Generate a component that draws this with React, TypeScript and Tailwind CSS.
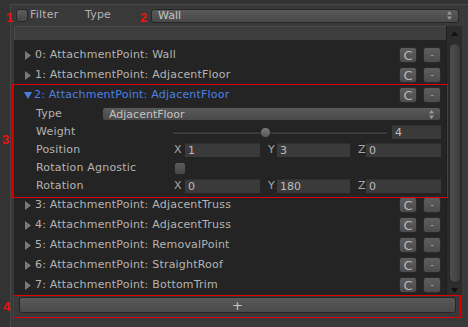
import React from "react";

const items = [
  "Wall",
  "AdjacentFloor",
  "AdjacentFloor",
  "AdjacentTruss",
  "AdjacentTruss",
  "RemovalPoint",
  "StraightRoof",
  "BottomTrim",
];

function UpDown() {
  return (
    <svg width="5" height="9" viewBox="0 0 5 9" className="shrink-0">
      <path d="M2.5 0 L5 3.5 L0 3.5 Z" fill="#9a9a9a" />
      <path d="M0 5.5 L5 5.5 L2.5 9 Z" fill="#9a9a9a" />
    </svg>
  );
}

function Dropdown({ value, width }: { value: string; width: number }) {
  return (
    <div
      className="h-[14px] flex items-center justify-between pl-[6px] pr-[6px] rounded-[3px] border border-[#262626] bg-gradient-to-b from-[#5a5a5a] to-[#494949] text-[#c4c4c4]"
      style={{ width }}
    >
      <span className="leading-none">{value}</span>
      <UpDown />
    </div>
  );
}

function Check() {
  return (
    <div className="w-[12px] h-[13px] rounded-[3px] border border-[#262626] bg-gradient-to-b from-[#5c5c5c] to-[#474747]" />
  );
}

function Field({ value, width }: { value: string; width: number }) {
  return (
    <div
      className="h-[14px] flex items-center pl-[3px] bg-[#3a3a3a] border-t border-[#2e2e2e] text-[#bdbdbd] leading-none"
      style={{ width }}
    >
      {value}
    </div>
  );
}

function Vec3({ x, y, z }: { x: string; y: string; z: string }) {
  return (
    <div className="flex items-center">
      <span className="w-[11px] text-[#a8a8a8]">X</span>
      <Field value={x} width={75} />
      <span className="w-[8px]" />
      <span className="w-[9px] text-[#a8a8a8]">Y</span>
      <Field value={y} width={73} />
      <span className="w-[8px]" />
      <span className="w-[8px] text-[#a8a8a8]">Z</span>
      <Field value={z} width={75} />
    </div>
  );
}

function SmallButton({ label }: { label: string }) {
  return (
    <div className="w-[18px] h-[16px] flex items-center justify-center rounded-[3px] border border-[#2a2a2a] bg-gradient-to-b from-[#5e5e5e] to-[#4c4c4c] text-[#b8b8b8] leading-none">
      {label === "C" ? <span className="text-[13px]">C</span> : <span className="text-[9px]">-</span>}
    </div>
  );
}

function ItemRow({ index, name, open }: { index: number; name: string; open?: boolean }) {
  return (
    <div className="h-[20px] flex items-center pl-[11px] pr-[5px]">
      {open ? (
        <svg width="8" height="7" viewBox="0 0 8 7" className="shrink-0 mr-[2px] -ml-[1px]">
          <path d="M0 0 L8 0 L4 7 Z" fill="#4c7fe0" />
        </svg>
      ) : (
        <svg width="6" height="9" viewBox="0 0 6 9" className="shrink-0 mr-[4px]">
          <path d="M0 0 L6 4.5 L0 9 Z" fill="#7a7a7a" />
        </svg>
      )}
      <span className={`flex-1 tracking-[0.2px] ${open ? "text-[#4c80e4]" : "text-[#b4b4b4]"}`}>
        {index}: AttachmentPoint: {name}
      </span>
      <SmallButton label="C" />
      <span className="w-[6px]" />
      <SmallButton label="-" />
    </div>
  );
}

function SubRow({ label, labelWidth, children }: { label: string; labelWidth: number; children?: React.ReactNode }) {
  return (
    <div className="h-[18px] flex items-center pl-[22px]">
      <span className="shrink-0 tracking-[0.2px] text-[#b4b4b4]" style={{ width: labelWidth }}>
        {label}
      </span>
      {children}
    </div>
  );
}

export default function App() {
  return (
    <div className="relative w-[468px] h-[327px] overflow-hidden bg-[#333333] font-['DejaVu_Sans',sans-serif] text-[11px]">
      <div className="ml-[10px] mt-[4px] h-[330px] border-l border-t border-[#474747] bg-[#393939]">
        {/* top bar */}
        <div className="h-[21px] flex items-center">
          <div className="w-[74px] flex items-center pl-[5px]">
            <Check />
            <span className="ml-[2px] tracking-[0.2px] text-[#b4b4b4]">Filter</span>
          </div>
          <span className="w-[66px] tracking-[0.2px] text-[#b4b4b4]">Type</span>
          <Dropdown value="Wall" width={308} />
        </div>

        {/* list */}
        <div className="ml-[3px] flex">
          <div className="w-[432px]">
            <div className="h-[14px] bg-[#3e3e3e] border-t border-l border-[#4a4a4a] rounded-tl-[3px]" />
            <div className="h-[256px] bg-[#242424] pt-[5px]">
              <ItemRow index={0} name={items[0]} />
              <ItemRow index={1} name={items[1]} />
              <ItemRow index={2} name={items[2]} open />
              <SubRow label="Type" labelWidth={66}>
                <Dropdown value="AdjacentFloor" width={339} />
              </SubRow>
              <SubRow label="Weight" labelWidth={137}>
                <div className="w-[214px] h-[11px] flex items-center relative">
                  <div className="w-full h-[3px] rounded-full bg-[#3c3c3c] border-t border-[#1c1c1c]" />
                  <div className="absolute left-[87px] top-0 w-[11px] h-[11px] rounded-full bg-gradient-to-b from-[#7a7a7a] to-[#5a5a5a] border border-[#2a2a2a]" />
                </div>
                <span className="w-[5px]" />
                <Field value="4" width={49} />
              </SubRow>
              <SubRow label="Position" labelWidth={138}>
                <Vec3 x="1" y="3" z="0" />
              </SubRow>
              <SubRow label="Rotation Agnostic" labelWidth={138}>
                <Check />
              </SubRow>
              <SubRow label="Rotation" labelWidth={138}>
                <Vec3 x="0" y="180" z="0" />
              </SubRow>
              {items.slice(3).map((n, i) => (
                <ItemRow key={i} index={i + 3} name={n} />
              ))}
            </div>
          </div>

          {/* scrollbar */}
          <div className="w-[16px] h-[270px] bg-[#2c2c2c] border-l border-[#1e1e1e] flex flex-col items-center">
            <svg width="7" height="5" viewBox="0 0 7 5" className="mt-[5px]">
              <path d="M3.5 0 L7 5 L0 5 Z" fill="#111111" />
            </svg>
            <div className="mt-[7px] w-[12px] h-[240px] rounded-full bg-gradient-to-r from-[#4e4e4e] via-[#474747] to-[#3c3c3c] border border-[#262626]" />
            <svg width="7" height="5" viewBox="0 0 7 5" className="mt-[5px]">
              <path d="M0 0 L7 0 L3.5 5 Z" fill="#111111" />
            </svg>
          </div>
        </div>

        {/* add button */}
        <div className="pt-[1px] pl-[8px]">
          <div className="w-[437px] h-[16px] flex items-center justify-center rounded-[3px] border border-[#262626] bg-gradient-to-b from-[#595959] to-[#4a4a4a] text-[#c8c8c8] text-[13px] leading-none">
            +
          </div>
        </div>
      </div>

      {/* annotations */}
      <span className="absolute left-[6px] top-[8px] text-[13px] font-bold text-[#ee1111] font-['Liberation_Sans',sans-serif]">1</span>
      <span className="absolute left-[140px] top-[8px] text-[13px] font-bold text-[#ee1111] font-['Liberation_Sans',sans-serif]">2</span>
      <span className="absolute left-[2px] top-[130px] text-[13px] font-bold text-[#ee1111] font-['Liberation_Sans',sans-serif]">3</span>
      <span className="absolute left-[3px] top-[297px] text-[13px] font-bold text-[#ee1111] font-['Liberation_Sans',sans-serif]">4</span>
      <div className="absolute left-[12px] top-[84px] w-[436px] h-[114px] border border-[#e00000]" />
      <div className="absolute left-[13px] top-[295px] w-[448px] h-[23px] border border-[#e00000]" />
    </div>
  );
}
